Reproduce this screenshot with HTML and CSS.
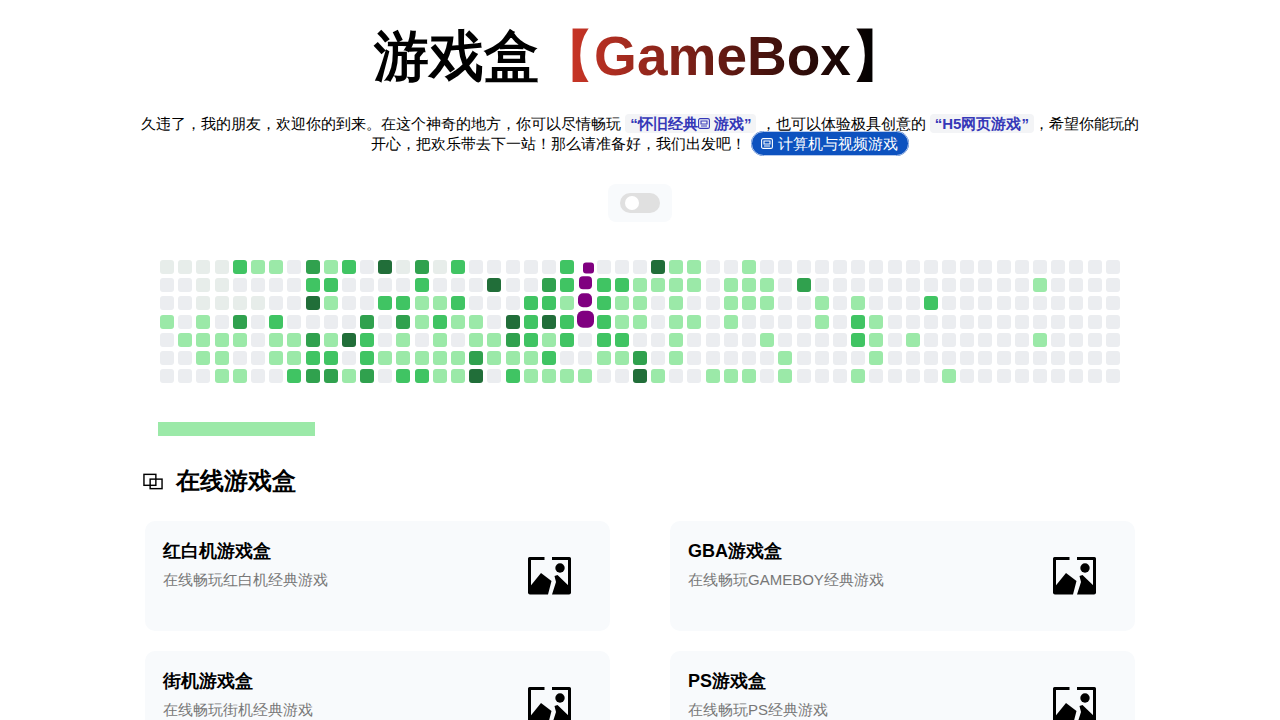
FILE: index.html
```html
<!DOCTYPE html>
<html lang="en">

<head>
    <meta charset="UTF-8" />
    <meta name="viewport" content="width=device-width, initial-scale=1.0" />
    <title>游戏盒【GameBox】</title>
    <link rel="stylesheet" href="styles.css">
</head>

<body>
    <div class="container">
        <h1 class="title">游戏盒<span class="title-brand">【GameBox】</span></h1>

        <p class="intro">
            久违了，我的朋友，欢迎你的到来。在这个神奇的地方，你可以尽情畅玩
            <a class="chip">“怀旧经典<svg class="chip-icon" viewBox="0 0 12 11"><rect x="0.6" y="0.6" width="10.8" height="9.8" rx="1.5" /><path d="M3 3h6v3H3zM3 8h6" /></svg> 游戏”</a>
            ，也可以体验极具创意的
            <a class="chip">“H5网页游戏”</a>，希望你能玩的开心，把欢乐带去下一站！那么请准备好，我们出发吧！
            <a class="pill"><svg class="pill-icon" viewBox="0 0 12 11"><rect x="0.6" y="0.6" width="10.8" height="9.8" rx="1.5" /><path d="M3 3h6v3H3zM3 8h6" /></svg>计算机与视频游戏</a>
        </p>

        <div class="toggle-box">
            <div class="toggle"><span class="toggle-knob"></span></div>
        </div>

        <div id="snakeGrid" class="snake-grid"></div>
        <div class="snake-bar"></div>

        <h2 class="section-title">
            <svg class="section-icon" viewBox="0 0 21 17">
                <rect x="1" y="1" width="12.5" height="11.5" />
                <rect x="7.5" y="6" width="12.5" height="10" />
            </svg>
            在线游戏盒
        </h2>

        <div class="cards">
            <div class="card">
                <div class="card-text">
                    <div class="card-title">红白机游戏盒</div>
                    <div class="card-desc">在线畅玩红白机经典游戏</div>
                </div>
                <svg class="card-icon" viewBox="0 0 44 38"><path class="frame" d="M16.5 1.5H1.5V36M24 1.5H41.5V36" /><circle cx="32" cy="11" r="4.7" /><path d="M0 32L13 16l10.5 8L20 37.5H2q-2 0-2-2zM26.5 19l3-1L43 31v4.5q0 2-2 2H24L28 25z" /></svg>
            </div>
            <div class="card">
                <div class="card-text">
                    <div class="card-title">GBA游戏盒</div>
                    <div class="card-desc">在线畅玩GAMEBOY经典游戏</div>
                </div>
                <svg class="card-icon" viewBox="0 0 44 38"><path class="frame" d="M16.5 1.5H1.5V36M24 1.5H41.5V36" /><circle cx="32" cy="11" r="4.7" /><path d="M0 32L13 16l10.5 8L20 37.5H2q-2 0-2-2zM26.5 19l3-1L43 31v4.5q0 2-2 2H24L28 25z" /></svg>
            </div>
            <div class="card">
                <div class="card-text">
                    <div class="card-title">街机游戏盒</div>
                    <div class="card-desc">在线畅玩街机经典游戏</div>
                </div>
                <svg class="card-icon" viewBox="0 0 44 38"><path class="frame" d="M16.5 1.5H1.5V36M24 1.5H41.5V36" /><circle cx="32" cy="11" r="4.7" /><path d="M0 32L13 16l10.5 8L20 37.5H2q-2 0-2-2zM26.5 19l3-1L43 31v4.5q0 2-2 2H24L28 25z" /></svg>
            </div>
            <div class="card">
                <div class="card-text">
                    <div class="card-title">PS游戏盒</div>
                    <div class="card-desc">在线畅玩PS经典游戏</div>
                </div>
                <svg class="card-icon" viewBox="0 0 44 38"><path class="frame" d="M16.5 1.5H1.5V36M24 1.5H41.5V36" /><circle cx="32" cy="11" r="4.7" /><path d="M0 32L13 16l10.5 8L20 37.5H2q-2 0-2-2zM26.5 19l3-1L43 31v4.5q0 2-2 2H24L28 25z" /></svg>
            </div>
        </div>
    </div>

    <script src="script.js"></script>
</body>

</html>
```

FILE: styles.css
```css
body {
    margin: 0;
    padding: 0;
    background: white;
    color: black;
    font-family: "Liberation Sans", sans-serif;
}

.container {
    width: 1000px;
    margin: 0 auto;
}

.title {
    margin: 0;
    padding-top: 21px;
    font-size: 55px;
    line-height: 70px;
    text-align: center;
}

.title-brand {
    background: linear-gradient(90deg, #dc3a2a 0%, black 92%);
    -webkit-background-clip: text;
    background-clip: text;
    color: transparent;
}

.intro {
    margin: 23px 0 0;
    font-size: 15px;
    line-height: 20px;
    text-align: center;
}

.chip {
    padding: 1px 5px;
    border-radius: 4px;
    background: #f3f4f6;
    color: #3538b8;
    font-weight: bold;
}

.chip-icon {
    width: 12px;
    height: 11px;
}

.chip-icon rect,
.chip-icon path {
    fill: none;
    stroke: #3538b8;
    stroke-width: 1.1;
}

.pill {
    padding: 3px 10px 3px 9px;
    border: 1px solid #b5c9ec;
    border-radius: 13px;
    background: #0d52bf;
    color: white;
}

.pill-icon {
    width: 12px;
    height: 11px;
    margin-right: 5px;
}

.pill-icon rect,
.pill-icon path {
    fill: none;
    stroke: white;
    stroke-width: 1.1;
}

.toggle-box {
    display: flex;
    align-items: center;
    justify-content: center;
    width: 64px;
    height: 38px;
    margin: 30px auto 0;
    border-radius: 8px;
    background: #f8fafc;
}

.toggle {
    display: flex;
    align-items: center;
    width: 40px;
    height: 20px;
    padding-left: 5px;
    box-sizing: border-box;
    border-radius: 10px;
    background: #e0e0e0;
}

.toggle-knob {
    width: 14px;
    height: 14px;
    border-radius: 50%;
    background: white;
}

.snake-grid {
    display: grid;
    grid-template-columns: repeat(53, 14px);
    grid-auto-rows: 14px;
    justify-content: space-between;
    row-gap: 4.2px;
    width: 960px;
    margin: 38px 0 0 20px;
}

.cell {
    border-radius: 3px;
    background: #ebedf0;
}

.lv1 { background: #9be9a8; }
.lv2 { background: #40c463; }
.lv3 { background: #30a14e; }
.lv4 { background: #216e39; }
.lv5 { background: #e7edea; }

.snake {
    place-self: center;
    background: purple;
}

.snake-0 { width: 11px; height: 11px; border-radius: 3px; transform: translate(3px, 0.5px); }
.snake-1 { width: 12.5px; height: 13px; border-radius: 4px; transform: translateY(-2.7px); }
.snake-2 { width: 14px; height: 14px; border-radius: 5px; transform: translateY(-2.7px); }
.snake-3 { width: 17px; height: 17px; border-radius: 6px; transform: translateY(-2.3px); }

.snake-bar {
    width: 157px;
    height: 14px;
    margin: 39px 0 0 18px;
    background: #9be9a8;
}

.section-title {
    display: flex;
    align-items: center;
    gap: 13px;
    margin: 28px 0 0 3px;
    font-size: 24px;
    line-height: 34px;
}

.section-icon {
    width: 20px;
    height: 17px;
}

.section-icon rect {
    fill: none;
    stroke: black;
    stroke-width: 1.5;
}

.cards {
    display: grid;
    grid-template-columns: 465px 465px;
    justify-content: space-between;
    row-gap: 20px;
    margin: 23px 5px 0;
}

.card {
    display: flex;
    justify-content: space-between;
    height: 110px;
    padding: 18px 38px 0 18px;
    box-sizing: border-box;
    border-radius: 10px;
    background: #f8fafc;
}

.card-title {
    font-size: 18px;
    font-weight: bold;
    line-height: 25px;
}

.card-desc {
    margin-top: 6px;
    color: #777;
    font-size: 15px;
    line-height: 20px;
}

.card-icon {
    width: 44px;
    height: 38px;
    margin-top: 18px;
}

.card-icon .frame {
    fill: none;
    stroke: black;
    stroke-width: 3;
    stroke-linejoin: round;
}
```

FILE: script.js
```js
// contribution grid, one string per weekday (spaces are only for reading)
// 0-5 = cell level, p = snake body
const rows = [
    '5555 211 0 312 0 45352 00000 2 p 000 411 00 1',
    '0055 0000 22 0000 2 000 4 00 32 p 22 1111 0 111 0 3 000000000000 1',
    '00 5555 00 41 00 22112 000 221 p 211 0 1 00 111 00 1 0 1 000 2',
    '10103020 000 3 0 3 1211 0 4242 p 211 0 11 0 1 0000 1 0 21',
    '01111011 3142 0 1 0 1 0 1 1321 2 0 22 00 1 0000 1 0000 21 0 1 000000 1',
    '00110011 22 0 2 11111 3 1112 00 11 3 0 1 00000 1 0000 1',
    '000 11 00 2 331 3 0 22 11 4 0 2 1111 00 41 00 111 0 1 000 1 0000 1'
];

const grid = document.getElementById('snakeGrid');

rows.forEach((row, y) => {
    const cells = row.replace(/ /g, '').padEnd(53, '0');
    for (const c of cells) {
        const cell = document.createElement('div');
        if (c === 'p') {
            cell.className = `cell snake snake-${y}`;
        } else {
            cell.className = `cell lv${c}`;
        }
        grid.appendChild(cell);
    }
});
```
